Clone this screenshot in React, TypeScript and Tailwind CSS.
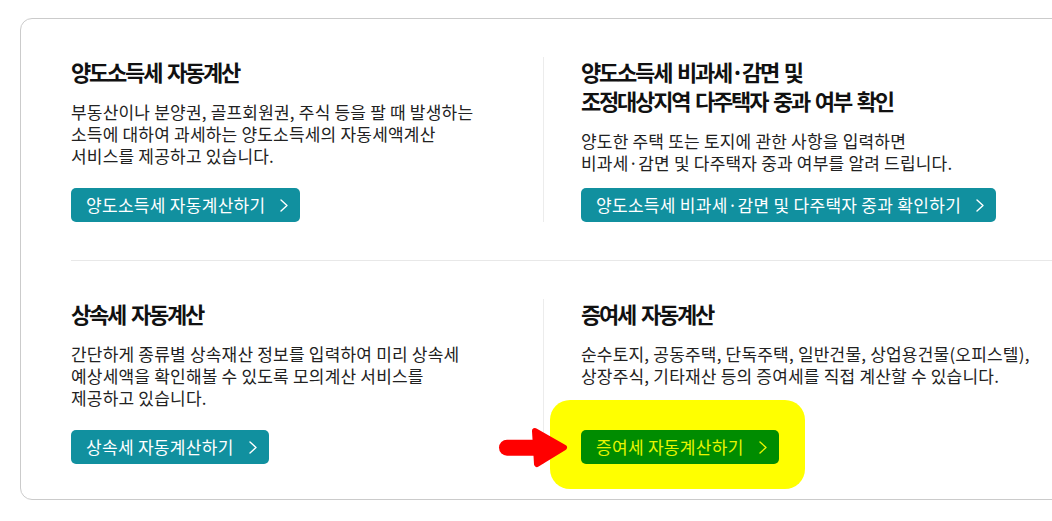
import React from "react"

function Chevron() {
  return (
    <svg width="8" height="13" viewBox="0 0 8 13" fill="none" className="shrink-0">
      <polyline points="1,1 7,6.5 1,12" stroke="currentColor" strokeWidth="1.4" strokeLinecap="round" strokeLinejoin="round" />
    </svg>
  )
}

function CalcButton({ label, green = false }: { label: string; green?: boolean }) {
  return (
    <button
      className={
        green
          ? "relative inline-flex h-[34px] items-center gap-[15px] rounded-[5px] bg-[#008c00] pl-[15px] pr-[12px] text-[17px] tracking-[0.3px] text-[#e8f500]"
          : "relative inline-flex h-[34px] items-center gap-[15px] rounded-[5px] bg-[#11909f] pl-[15px] pr-[12px] text-[17px] tracking-[0.3px] text-white"
      }
    >
      <span className="whitespace-nowrap">{label}</span>
      <Chevron />
    </button>
  )
}

function Section({
  title,
  desc,
  button,
  divider = false,
  highlight = false,
}: {
  title: string[]
  desc: string[]
  button: string
  divider?: boolean
  highlight?: boolean
}) {
  return (
    <div className={divider ? "flex flex-col border-l border-[#ececec] pl-[37px]" : "flex flex-col"}>
      <h3 className="text-[22px] font-bold leading-[29px] tracking-[-2.2px] text-[#111] [word-spacing:3px]">
        {title.map((t) => (
          <div key={t}>{t}</div>
        ))}
      </h3>
      <p className="mt-[15px] text-[17px] leading-[22px] tracking-[0.2px] text-[#222]">
        {desc.map((d) => (
          <span key={d} className="block whitespace-nowrap">
            {d}
          </span>
        ))}
      </p>
      <div className="mt-auto pt-[14px]">
        <div className="relative inline-block">
          {highlight && (
            <span className="absolute -left-[31px] -top-[30px] -right-[26px] -bottom-[25px] rounded-[20px] bg-[#ffff00]" />
          )}
          <CalcButton label={button} green={highlight} />
          {highlight && (
            <svg
              width="74"
              height="48"
              viewBox="0 0 74 48"
              className="absolute -left-[85px] -top-[6px]"
            >
              <line x1="11" y1="23.7" x2="42" y2="23.7" stroke="#ff0000" strokeWidth="16" strokeLinecap="round" />
              <polygon
                points="39,7 68,23.5 41,40"
                fill="#ff0000"
                stroke="#ff0000"
                strokeWidth="6"
                strokeLinejoin="round"
              />
            </svg>
          )}
        </div>
      </div>
    </div>
  )
}

export default function App() {
  return (
    <div className="h-[521px] w-[1052px] overflow-hidden bg-white font-['Noto_Sans_CJK_KR','Noto_Sans',sans-serif]">
      <div className="ml-[20px] mt-[18px] w-[1100px] rounded-[12px] border border-[#cbcbcb] pb-[35px] pl-[50px] pt-[38px]">
        {/* 양도소득세 */}
        <div className="grid min-h-[165px] grid-cols-[472px_1fr] border-b border-[#e8e8e8] pb-[38px]">
          <Section
            title={["양도소득세 자동계산"]}
            desc={[
              "부동산이나 분양권, 골프회원권, 주식 등을 팔 때 발생하는",
              "소득에 대하여 과세하는 양도소득세의 자동세액계산",
              "서비스를 제공하고 있습니다.",
            ]}
            button="양도소득세 자동계산하기"
          />
          <Section
            divider
            title={["양도소득세 비과세·감면 및", "조정대상지역 다주택자 중과 여부 확인"]}
            desc={[
              "양도한 주택 또는 토지에 관한 사항을 입력하면",
              "비과세·감면 및 다주택자 중과 여부를 알려 드립니다.",
            ]}
            button="양도소득세 비과세·감면 및 다주택자 중과 확인하기"
          />
        </div>

        {/* 상속세 / 증여세 */}
        <div className="grid min-h-[203px] grid-cols-[472px_1fr] pt-[38px]">
          <Section
            title={["상속세 자동계산"]}
            desc={[
              "간단하게 종류별 상속재산 정보를 입력하여 미리 상속세",
              "예상세액을 확인해볼 수 있도록 모의계산 서비스를",
              "제공하고 있습니다.",
            ]}
            button="상속세 자동계산하기"
          />
          <Section
            divider
            highlight
            title={["증여세 자동계산"]}
            desc={[
              "순수토지, 공동주택, 단독주택, 일반건물, 상업용건물(오피스텔),",
              "상장주식, 기타재산 등의 증여세를 직접 계산할 수 있습니다.",
            ]}
            button="증여세 자동계산하기"
          />
        </div>
      </div>
    </div>
  )
}
